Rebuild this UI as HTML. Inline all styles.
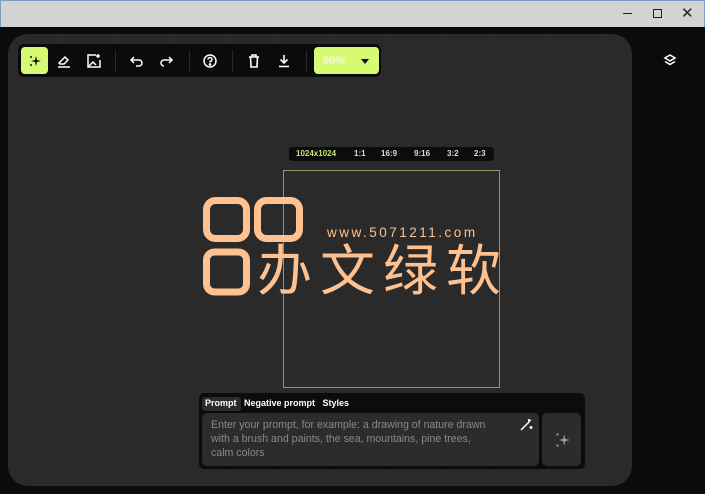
<!DOCTYPE html>
<html><head><style>
*{margin:0;padding:0;box-sizing:border-box}
body{width:705px;height:494px;overflow:hidden;background:#0b0b0b;font-family:"Liberation Sans","Noto Sans CJK SC",sans-serif;position:relative}
.tb{position:absolute;left:0;top:0;width:705px;height:27px;background:#d3d3d3;border-top:1px solid #7a9cc6;border-left:1px solid #7a9cc6;border-right:1px solid #7a9cc6}
.panel{position:absolute;left:8px;top:34px;width:624px;height:452px;background-color:#2a2a2a;border-radius:20px;
background-image:linear-gradient(#2e2e2e 1px,transparent 1px),linear-gradient(90deg,#2e2e2e 1px,transparent 1px);background-size:54px 54px;background-position:0 18px}
.abs{position:absolute}
.tool{position:absolute;left:18px;top:44px;width:363px;height:33px;background:#0b0b0b;border-radius:6px}
.sep{position:absolute;top:50px;width:1px;height:22px;background:#2a2a2a}
svg{position:absolute}
</style></head><body>
<div class="tb">
<div class="abs" style="left:622px;top:12px;width:9px;height:1px;background:#222"></div>
<div class="abs" style="left:652px;top:8px;width:9px;height:9px;border:1px solid #222"></div>
<div class="abs" style="left:680px;top:3px;font-size:15px;color:#222">✕</div>
</div>
<div class="panel"></div>
<div class="tool"></div>
<div class="abs" style="left:21px;top:47px;width:27px;height:27px;background:#d7fa75;border-radius:4px"></div>
<svg style="left:27px;top:53px" width="16" height="16" viewBox="0 0 16 16"><path d="M9 3 L10 7 L14 8 L10 9 L9 13 L8 9 L4 8 L8 7Z" fill="#111"/><circle cx="4" cy="4" r="1" fill="#111"/><circle cx="4" cy="12" r="1" fill="#111"/></svg>
<svg style="left:56px;top:53px" width="16" height="16" viewBox="0 0 16 16" fill="none" stroke="#fff" stroke-width="1.5"><path d="M3 10 L9 4 L12 7 L8 11 H4Z"/><path d="M2 14H14"/></svg>
<svg style="left:86px;top:53px" width="16" height="16" viewBox="0 0 16 16" fill="none" stroke="#fff" stroke-width="1.5"><path d="M10 2H2V14H14V7"/><path d="M3 13 L7 9 L10 12"/><path d="M12 1V5M10 3H14"/></svg>
<div class="sep" style="left:115px"></div>
<svg style="left:129px;top:53px" width="16" height="16" viewBox="0 0 16 16" fill="none" stroke="#fff" stroke-width="1.5"><path d="M5 4 L2 7 L5 10"/><path d="M2 7H10A3 3 0 0 1 10 13H7"/></svg>
<svg style="left:158px;top:53px" width="16" height="16" viewBox="0 0 16 16" fill="none" stroke="#fff" stroke-width="1.5"><path d="M11 4 L14 7 L11 10"/><path d="M14 7H6A3 3 0 0 0 6 13H6"/></svg>
<div class="sep" style="left:189px"></div>
<svg style="left:202px;top:53px" width="16" height="16" viewBox="0 0 16 16" fill="none" stroke="#fff" stroke-width="1.5"><circle cx="8" cy="8" r="6"/><path d="M6 6.5A2 2 0 1 1 8 8.5V9.5"/><circle cx="8" cy="11.5" r=".6" fill="#fff"/></svg>
<div class="sep" style="left:232px"></div>
<svg style="left:246px;top:53px" width="16" height="16" viewBox="0 0 16 16" fill="none" stroke="#fff" stroke-width="1.6"><path d="M3 4H13M6 4V2H10V4M4.5 4L5 14H11L11.5 4"/></svg>
<svg style="left:276px;top:53px" width="16" height="16" viewBox="0 0 16 16" fill="none" stroke="#fff" stroke-width="1.6"><path d="M8 2V10M4.5 6.5L8 10L11.5 6.5M3 13.5H13"/></svg>
<div class="sep" style="left:306px"></div>
<div class="abs" style="left:314px;top:47px;width:65px;height:27px;background:#d7fa75;border-radius:4px"></div>
<div class="abs" style="left:323px;top:55px;font-size:11px;font-weight:bold;color:#f4f4e8">60%</div>
<div class="abs" style="left:361px;top:59px;width:0;height:0;border-left:4px solid transparent;border-right:4px solid transparent;border-top:5px solid #111"></div>
<svg style="left:662px;top:53px" width="16" height="16" viewBox="0 0 16 16" fill="none" stroke="#fff" stroke-width="1.6"><path d="M8 2L13 5L8 8L3 5Z"/><path d="M3 8.5L8 11.5L13 8.5"/></svg>

<div class="abs" style="left:289px;top:147px;width:205px;height:14px;background:#0c0c0c;border-radius:3px;font-size:8px;font-weight:bold;color:#ddd;line-height:14px">
<span class="abs" style="left:7px;color:#c4e27a">1024x1024</span><span class="abs" style="left:65px">1:1</span><span class="abs" style="left:92px">16:9</span><span class="abs" style="left:125px">9:16</span><span class="abs" style="left:158px">3:2</span><span class="abs" style="left:185px">2:3</span></div>
<div class="abs" style="left:283px;top:170px;width:217px;height:218px;border:1px solid #8a9c62"></div>

<svg style="left:200px;top:194px" width="110" height="106" viewBox="0 0 110 106" fill="none" stroke="#ffc18f" stroke-width="7"><rect x="6.5" y="6.5" width="40" height="38" rx="9"/><rect x="57.5" y="6.5" width="42" height="38" rx="9"/><rect x="6.5" y="58" width="40" height="40" rx="8"/></svg>
<div class="abs" style="left:327px;top:225px;font-size:13.5px;letter-spacing:2.5px;color:#ffc18f;font-family:'Liberation Sans',sans-serif">www.5071211.com</div>
<div class="abs" style="left:257px;top:238px;font-size:55px;letter-spacing:8px;color:#ffc18f;line-height:66px;white-space:nowrap">办文绿软</div>

<div class="abs" style="left:199px;top:393px;width:386px;height:76px;background:#0c0c0c;border-radius:5px"></div>
<div class="abs" style="left:202px;top:397px;width:39px;height:14px;background:#2c2c2c;border-radius:3px"></div>
<div class="abs" style="left:205px;top:398px;font-size:9px;font-weight:bold;color:#fff;white-space:nowrap">Prompt <span style="margin-left:5px">Negative prompt</span> <span style="margin-left:5px">Styles</span></div>
<div class="abs" style="left:202px;top:413px;width:337px;height:53px;background:#2c2c2c;border-radius:5px"></div>
<div class="abs" style="left:211px;top:418px;width:278px;font-size:10.6px;line-height:14px;color:#888">Enter your prompt, for example: a drawing of nature drawn with a brush and paints, the sea, mountains, pine trees, calm colors</div>
<svg style="left:519px;top:418px" width="14" height="14" viewBox="0 0 14 14" fill="none" stroke="#fff" stroke-width="1.5"><path d="M2 12L10 4"/><path d="M10 1V4M12 2.5H9M12 8V11M13.5 9.5H10.5"/></svg>
<div class="abs" style="left:542px;top:413px;width:39px;height:53px;background:#2c2c2c;border-radius:5px"></div>
<svg style="left:553px;top:431px" width="18" height="18" viewBox="0 0 16 16"><path d="M10 3 L11 7 L15 8 L11 9 L10 13 L9 9 L5 8 L9 7Z" fill="#999"/><circle cx="4" cy="3" r="1" fill="#999"/><circle cx="4" cy="13" r="1" fill="#999"/></svg>
</body></html>
